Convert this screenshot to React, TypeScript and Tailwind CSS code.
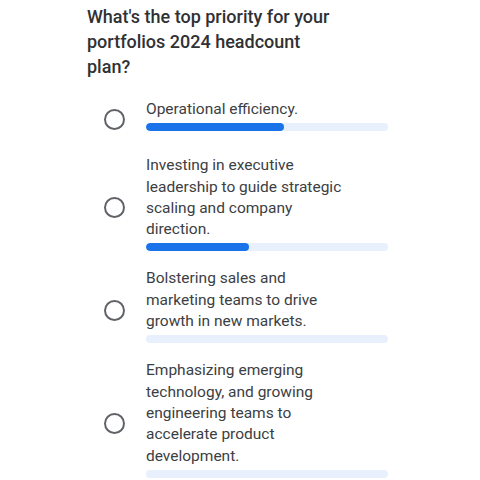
const options = [
  { label: 'Operational efficiency.', pct: 57 },
  { label: 'Investing in executive leadership to guide strategic scaling and company direction.', pct: 42.5 },
  { label: 'Bolstering sales and marketing teams to drive growth in new markets.', pct: 0 },
  {
    label: 'Emphasizing emerging technology, and growing engineering teams to accelerate product development.',
    pct: 0,
  },
];

function Radio() {
  return <div className="w-[21px] h-[21px] shrink-0 rounded-full border-2 border-[#5f6368]" />;
}

export default function App() {
  return (
    <div className="w-[480px] h-[480px] bg-white overflow-hidden pl-[87px] pt-[4px] font-['Roboto',sans-serif] text-[#3c4043]">
      <h1 className="text-[18px] leading-[25px] font-medium w-[260px] text-[#303134]">
        What's the top priority for your portfolios 2024 headcount plan?
      </h1>

      <div className="ml-[17px] mt-[20px] flex flex-col gap-[8px]">
        {options.map((o, i) => (
          <div key={i} className={i === 0 ? 'flex items-center gap-[21px] mb-[7px]' : 'flex items-center gap-[21px]'}>
            <Radio />
            <div className="w-[242px] pb-[9px]">
              <p className="max-w-[200px] text-[15.5px] leading-[21.3px]">{o.label}</p>
              <div className="mt-[3px] h-2 w-full rounded-full bg-[#e8f0fe] overflow-hidden">
                <div className="h-full rounded-full bg-[#1a73e8]" style={{ width: `${o.pct}%` }} />
              </div>
            </div>
          </div>
        ))}
      </div>
    </div>
  );
}
